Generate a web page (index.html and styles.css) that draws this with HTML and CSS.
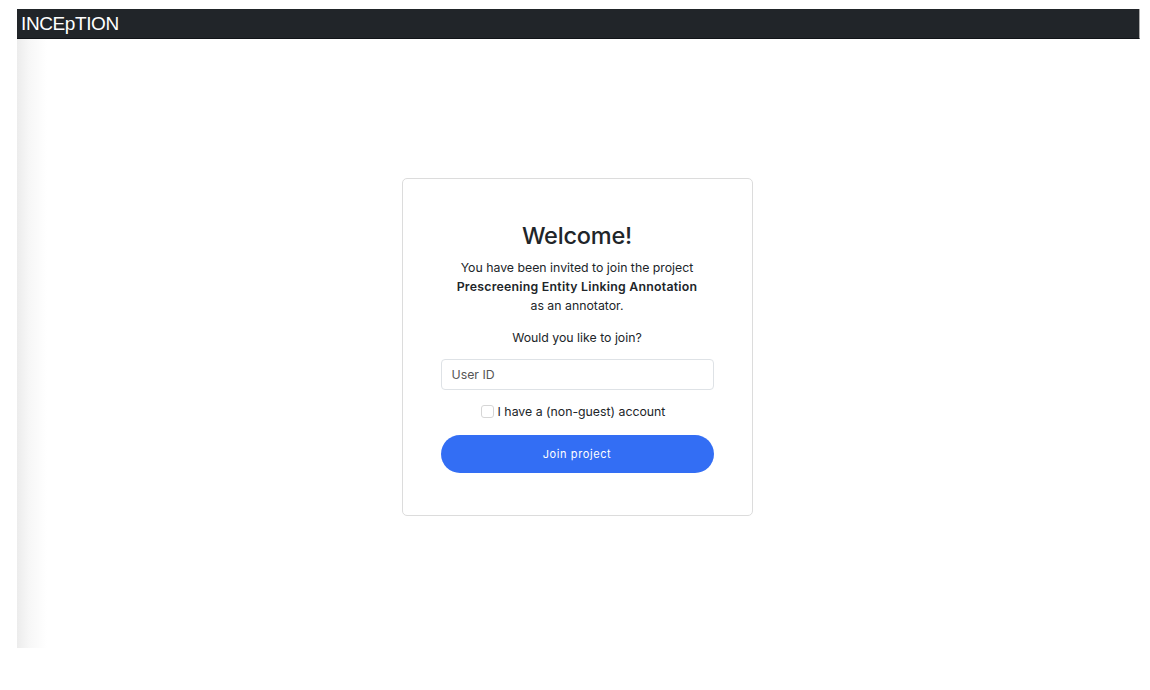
FILE: index.html
```html
<!DOCTYPE html>
<html lang="en">
<head>
    <meta charset="UTF-8">
    <meta name="viewport" content="width=device-width, initial-scale=1.0">
    <title>INCEpTION - Join project</title>
    <link rel="stylesheet" href="styles.css">
</head>
<body>
    <div class="frame">
        <!-- Top bar -->
        <nav class="navbar">
            <span class="brand">INCEpTION</span>
        </nav>

        <!-- Invite -->
        <main class="main">
            <div class="card">
                <h1>Welcome!</h1>
                <p class="intro">
                    You have been invited to join the project<br>
                    <strong>Prescreening Entity Linking Annotation</strong><br>
                    as an annotator.
                </p>
                <p class="question">Would you like to join?</p>
                <input type="text" class="user-id" placeholder="User ID">
                <label class="check">
                    <input type="checkbox">
                    <span class="box"></span>
                    I have a (non-guest) account
                </label>
                <button class="join-btn">Join project</button>
            </div>
        </main>
    </div>
</body>
</html>
```

FILE: styles.css
```css
body {
    margin: 0;
    background: #fff;
    font-family: Inter, "Noto Sans", sans-serif;
    color: #212529;
}
.frame {
    margin: 9px 10px 0 17px;
}
.navbar {
    height: 29px;
    background: #212529;
    border-bottom: 1px solid #111418;
    border-right: 1px solid #aaa;
    display: flex;
    align-items: center;
    padding-left: 4px;
}
.brand {
    font-family: "Liberation Sans", Arial, sans-serif;
    font-size: 19px;
    color: #fff;
    letter-spacing: -0.4px;
}
.main {
    height: 470px;
    padding-top: 139px;
    background: linear-gradient(to right, #ececec 0, #f7f7f7 12px, #fff 30px);
    display: flex;
    justify-content: center;
}
.card {
    width: 273px;
    height: 278px;
    padding: 42px 38px 16px 38px;
    border: 1px solid #dcdcdc;
    border-radius: 5px;
    background: #fff;
    text-align: center;
    margin-left: -3px;
}
h1 {
    margin: 0 0 8px;
    font-size: 23.5px;
    font-weight: 500;
    letter-spacing: -0.2px;
}
.intro, .question {
    margin: 0;
    font-size: 12.3px;
    line-height: 19px;
}
.intro strong {
    font-weight: 600;
    letter-spacing: 0.25px;
}
.question {
    margin-top: 13px;
}
.user-id {
    display: block;
    box-sizing: border-box;
    width: 100%;
    height: 31px;
    margin-top: 12px;
    padding: 0 10px;
    border: 1px solid #dee2e6;
    border-radius: 4px;
    font-family: inherit;
    font-size: 12.3px;
}
.user-id::placeholder {
    color: #555;
}
.check {
    display: flex;
    justify-content: center;
    align-items: center;
    gap: 4px;
    margin-top: 14px;
    margin-left: -8px;
    font-size: 12.3px;
}
.check input {
    display: none;
}
.box {
    width: 11px;
    height: 11px;
    border: 1px solid #d6d6d6;
    border-radius: 3px;
}
.join-btn {
    display: block;
    width: 100%;
    height: 38px;
    margin-top: 16px;
    border: none;
    border-radius: 19px;
    background: #336ef4;
    color: #fff;
    font-family: inherit;
    font-size: 11px;
    font-weight: 400;
    letter-spacing: 0.6px;
    cursor: pointer;
}
```
